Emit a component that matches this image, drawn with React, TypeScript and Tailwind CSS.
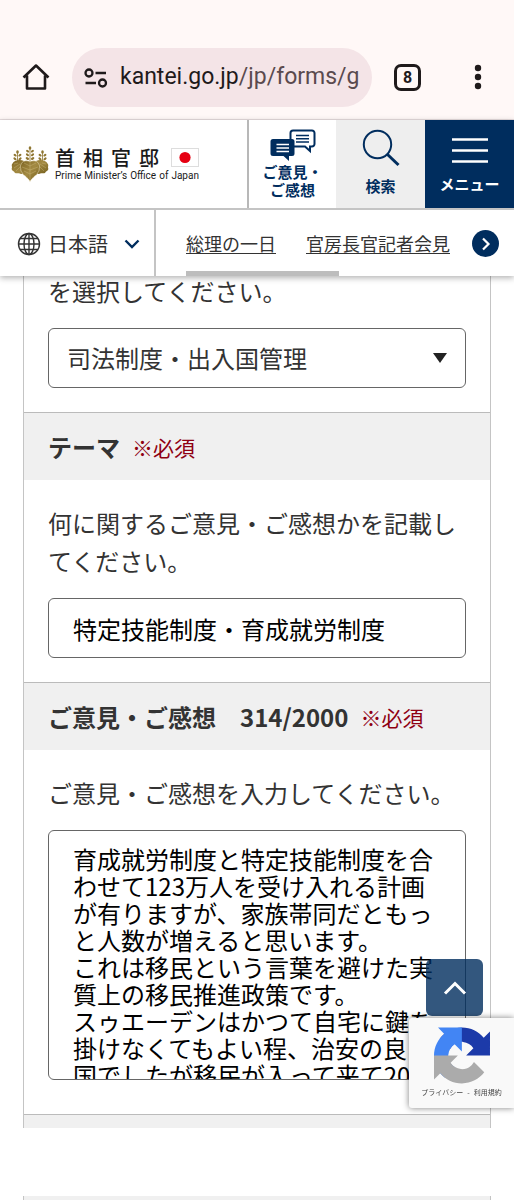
import React, { useState } from 'react';

const newsLinks = [
  { href: '#day', label: '総理の一日' },
  { href: '#press', label: '官房長官記者会見' },
];

const categories = ['司法制度・出入国管理', '経済・財政', '外交・安全保障'];

const initialOpinion = `育成就労制度と特定技能制度を合わせて123万人を受け入れる計画が有りますが、家族帯同だともっと人数が増えると思います。
これは移民という言葉を避けた実質上の移民推進政策です。
スゥエーデンはかつて自宅に鍵を掛けなくてもよい程、治安の良い国でしたが移民が入って来て2000年`;

const BrowserBar: React.FC = () => (
  <div className="flex h-[120px] items-end border-b border-[#e6dcdd] bg-[#fff8f7] pb-3 pl-[22px] pr-[22px] text-[#1f1a1b]">
    <button aria-label="Home" className="mb-4 shrink-0">
      <svg width="28" height="28" viewBox="0 0 28 28" fill="none" stroke="currentColor" strokeWidth="2.6" strokeLinejoin="round">
        <path d="M1.5 14.5 14 2.5l12.500 12M5 12.500v13h18v-13" />
      </svg>
    </button>
    <button className="ml-[22px] flex h-[59px] min-w-0 flex-1 items-center overflow-hidden rounded-full bg-[#f4e4e7] pl-3">
      <svg className="shrink-0" width="24" height="20" viewBox="0 0 24 20" fill="none" stroke="currentColor" strokeWidth="2.300">
        <circle cx="5" cy="5" r="3.500" />
        <path d="M11.500 5H22M1.500 15H12" />
        <circle cx="18.500" cy="15" r="3.500" />
      </svg>
      <span className="ml-3 whitespace-nowrap font-[Roboto,sans-serif] text-[23px]">
        kantei.go.jp<span className="text-[#5a4a4e]">/jp/forms/g</span>
      </span>
    </button>
    <button
      aria-label="Tabs"
      className="mb-4 ml-[22px] flex h-[27px] w-[27px] shrink-0 items-center justify-center rounded-[7px] border-[3px] border-[#1f1a1b] font-[Roboto,sans-serif] text-base font-bold"
    >
      8
    </button>
    <button aria-label="More" className="mb-4 ml-[43px] shrink-0">
      <svg width="28" height="28" viewBox="0 0 28 28" fill="currentColor">
        <circle cx="14" cy="5" r="3.200" />
        <circle cx="14" cy="14" r="3.200" />
        <circle cx="14" cy="23" r="3.200" />
      </svg>
    </button>
  </div>
);

const Sprig: React.FC<{ x: number; y: number; tall?: boolean }> = ({ x, y, tall }) => (
  <g transform={`translate(${x} ${y})`} fill="#8f7631">
    <path d="M-.4 -1h.8v14h-.8z" />
    <ellipse cx="0" cy="-1" rx="1.300" ry="1.800" />
    <ellipse cx="-2.400" cy="2.200" rx="1.700" ry="1.100" transform="rotate(35 -2.400 2.200)" />
    <ellipse cx="2.400" cy="2.200" rx="1.700" ry="1.100" transform="rotate(-35 2.400 2.200)" />
    <ellipse cx="-2.500" cy="5.800" rx="1.800" ry="1.100" transform="rotate(35 -2.500 5.800)" />
    <ellipse cx="2.500" cy="5.800" rx="1.800" ry="1.100" transform="rotate(-35 2.500 5.800)" />
    {tall && (
      <>
        <ellipse cx="-2.600" cy="9.500" rx="1.900" ry="1.200" transform="rotate(35 -2.600 9.500)" />
        <ellipse cx="2.600" cy="9.500" rx="1.900" ry="1.200" transform="rotate(-35 2.600 9.500)" />
      </>
    )}
  </g>
);

const PaulowniaCrest: React.FC = () => (
  <svg className="shrink-0" width="38" height="36" viewBox="0 0 38 36">
    <defs>
      <linearGradient id="gold" x1="0" x2="1" y1="0" y2="1">
        <stop offset="0" stopColor="#7d6422" />
        <stop offset=".5" stopColor="#a38a42" />
        <stop offset="1" stopColor="#75601f" />
      </linearGradient>
    </defs>
    <Sprig x={19} y={3} tall />
    <Sprig x={6.5} y={7} />
    <Sprig x={31.5} y={7} />
    <path
      fill="url(#gold)"
      d="M13 15C9 13 3 14 1.500 17.500c-1.800 2 .3 3-.9 5.500.4 2 2.500 2 3.400 4 2 1 4-.5 6 1 2-.2 4-1 5-1.500zM25 15c4-2 10-1 11.500 2.500 1.800 2-.3 3 .9 5.500-.4 2-2.500 2-3.400 4-2 1-4-.5-6 1-2-.2-4-1-5-1.500z"
    />
    <path
      fill="url(#gold)"
      stroke="#efe6c8"
      strokeWidth=".5"
      d="M19 15.500c-4-1.500-8-.5-9 3-1.500 2 .2 3.500-.2 5.500.2 2 2 2.500 2.200 4.500 1.500 1.500 2.500 1 3.500 3 1 .5 2.500 2 3.500 4 1-2 2.500-3.500 3.500-4 1-2 2-1.500 3.500-3 .2-2 2-2.500 2.200-4.500-.4-2 1.300-3.500-.2-5.500-1-3.500-5-4.500-9-3z"
    />
    <path
      fill="none"
      stroke="#d8c88f"
      strokeWidth=".35"
      d="M19 16v17M19 20l-6-3M19 20l6-3M19 24l-8-3M19 24l8-3M19 28l-6-3M19 28l6-3M9 18l-6 4M9 21l-4 4M7 17l-4 1M29 18l6 4M29 21l4 4M31 17l4 1"
    />
  </svg>
);

const SiteHeader: React.FC = () => (
  <header className="relative z-10 bg-white shadow-[0_2px_6px_rgba(0,0,0,0.3)]">
    <div className="flex h-[90px] border-b-2 border-[#c4c4c4]">
      <a href="#top" className="flex min-w-0 flex-1 items-center pl-[11px]">
        <PaulowniaCrest />
        <span className="ml-[6px] flex w-[144px] shrink-0 flex-col">
          <span className="flex items-center justify-between">
            <span className="flex gap-2 text-xl leading-5 font-medium text-[#1a1a1a]">
              <span>首</span>
              <span>相</span>
              <span>官</span>
              <span>邸</span>
            </span>
            <svg width="28" height="19" viewBox="0 0 28 19">
              <rect x=".5" y=".5" width="27" height="18" fill="#fff" stroke="#ddd" />
              <circle cx="14" cy="9.500" r="5.600" fill="#e60012" />
            </svg>
          </span>
          <span className="mt-[2px] flex justify-between font-[Roboto,sans-serif] text-[10px] leading-[11px] text-[#1a1a1a]">
            <span>Prime</span>
            <span>Minister’s</span>
            <span>Office</span>
            <span>of</span>
            <span>Japan</span>
          </span>
        </span>
      </a>
      <a href="#opinion" className="flex w-[89px] flex-col items-center border-l-2 border-[#b8b8b8] pt-[9px] text-center text-[15px] leading-[18px] font-bold text-[#002d5e]">
        <svg width="46" height="34" viewBox="0 0 46 34">
          <path d="M23 1.500h19a2.500 2.500 0 0 1 2.500 2.500v11a2.500 2.500 0 0 1-2.500 2.500h-2v4.500l-5-4.500H23a2.500 2.500 0 0 1-2.500-2.500V4A2.500 2.500 0 0 1 23 1.500z" fill="#fff" stroke="#002d5e" strokeWidth="2" />
          <path d="M26 6.500h13M26 9.800h13M26 13h13" stroke="#002d5e" strokeWidth="1.500" />
          <path d="M3 10h19a2.500 2.500 0 0 1 2.500 2.500v12A2.500 2.500 0 0 1 22 27h-3v5l-5.500-5H3A2.500 2.500 0 0 1 .5 24.500v-12A2.500 2.500 0 0 1 3 10z" fill="#002d5e" />
          <path d="M6.500 15.500H19M6.500 19H19M6.500 22.500H19" stroke="#fff" strokeWidth="1.500" />
        </svg>
        <span>
          ご意見・
          <br />
          ご感想
        </span>
      </a>
      <button className="flex w-[89px] flex-col items-center bg-[#eee] pt-[9px] text-[15px] leading-[18px] font-bold text-[#002d5e]">
        <svg width="38" height="38" viewBox="0 0 38 38" fill="none" stroke="currentColor">
          <circle cx="15.500" cy="15.500" r="13.700" strokeWidth="2" />
          <path d="m25 25 11.500 11" strokeWidth="3" />
        </svg>
        <span className="mt-[10px]">検索</span>
      </button>
      <button className="flex w-[89px] flex-col items-center bg-[#002d5e] pt-[17px] text-[15px] leading-[18px] font-bold text-white">
        <svg width="36" height="28" viewBox="0 0 36 28" stroke="currentColor" strokeWidth="2.500">
          <path d="M0 2.500h36M0 13.500h36M0 24.500h36" />
        </svg>
        <span className="mt-[10px]">メニュー</span>
      </button>
    </div>

    <div className="flex h-[66px]">
      <button className="flex w-[156px] shrink-0 items-center border-r-2 border-[#c4c4c4] pt-[2px] pl-[17px] text-xl text-[#333]">
        <svg width="24" height="24" viewBox="0 0 24 24" fill="none" stroke="currentColor" strokeWidth="1.400">
          <circle cx="12" cy="12" r="10.500" />
          <ellipse cx="12" cy="12" rx="5" ry="10.500" />
          <path d="M12 1.500v21M1.500 12h21M3 6.500h18M3 17.500h18" />
        </svg>
        <span className="ml-[7px]">日本語</span>
        <svg className="ml-4" width="16" height="10" viewBox="0 0 16 10" fill="none" stroke="#002d5e" strokeWidth="2.400">
          <path d="m1.500 1.500 6.500 6.500 6.500-6.500" />
        </svg>
      </button>
      <nav className="flex min-w-0 flex-1 flex-col justify-between pl-[30px]">
        <div className="flex h-[60px] items-end">
          <ul className="flex flex-1 gap-[30px] pb-[13px] text-lg leading-7 whitespace-nowrap text-[#333]">
            {newsLinks.map((link) => (
              <li key={link.href}>
                <a href={link.href} className="underline decoration-1 underline-offset-2">{link.label}</a>
              </li>
            ))}
          </ul>
          <button aria-label="次へ" className="mr-[15px] mb-[13px] flex h-[27px] w-[27px] shrink-0 items-center justify-center rounded-full bg-[#002d5e]">
            <svg width="10" height="14" viewBox="0 0 10 14" fill="none" stroke="#fff" strokeWidth="2.200">
              <path d="m2 1.500 5.500 5.500L2 12.500" />
            </svg>
          </button>
        </div>
        <div className="h-[5px] w-[153px] bg-[#bdbdbd]" />
      </nav>
    </div>
  </header>
);

const FieldHeading: React.FC<{ htmlFor: string; title: string }> = ({ htmlFor, title }) => (
  <div className="flex h-[68px] items-center border-t border-[#bbb] bg-[#f0f0f0] px-6">
    <label htmlFor={htmlFor} className="text-2xl font-bold whitespace-pre">{title}</label>
    <span className="ml-3 text-[21px] text-[#8f0012]">※必須</span>
  </div>
);

const RecaptchaBadge: React.FC = () => (
  <div className="fixed right-0 bottom-[92px] z-20 flex h-[90px] w-[105px] flex-col items-center rounded-l-[3px] bg-[#f9f9f9] pt-[9px] shadow-[0_0_6px_rgba(0,0,0,0.5)]">
    <svg width="56" height="57" viewBox="0 0 64 64">
      <path fill="#1c3aa9" d="M64 31.955l-.033-1.370V4.687l-7.160 7.160C50.948 4.674 42.033.093 32.050.093c-10.400 0-19.622 4.960-25.458 12.640l11.736 11.860a15.550 15.550 0 0 1 4.754-5.334c2.050-1.600 4.952-2.906 8.968-2.906.485 0 .860.057 1.135.163 4.976.393 9.288 3.140 11.828 7.124l-8.307 8.307L64 31.953" />
      <path fill="#4285f4" d="M31.862.094l-1.370.033H4.594l7.160 7.160C4.580 13.147 0 22.060 0 32.046c0 10.400 4.960 19.622 12.640 25.458L24.500 45.768a15.550 15.550 0 0 1-5.334-4.754c-1.600-2.050-2.906-4.952-2.906-8.968 0-.485.057-.860.163-1.135.393-4.976 3.140-9.288 7.124-11.828l8.307 8.307L31.860.095" />
      <path fill="#ababab" d="M.001 32.045l.033 1.370v25.898l7.160-7.160c5.860 7.173 14.774 11.754 24.760 11.754 10.400 0 19.622-4.960 25.458-12.640l-11.736-11.860a15.550 15.550 0 0 1-4.754 5.334c-2.050 1.600-4.952 2.906-8.968 2.906-.485 0-.860-.057-1.135-.163-4.976-.393-9.288-3.140-11.828-7.124l8.307-8.307L0 32.047" />
    </svg>
    <p className="mt-[2px] flex gap-1 text-[7px] leading-3 whitespace-nowrap text-[#444]">
      <a href="#privacy">プライバシー</a>
      <span>-</span>
      <a href="#terms">利用規約</a>
    </p>
  </div>
);

const App: React.FC = () => {
  const [category, setCategory] = useState(categories[0]);
  const [theme, setTheme] = useState('特定技能制度・育成就労制度');
  const [opinion, setOpinion] = useState(initialOpinion);

  return (
    <div className="bg-white font-['Noto_Sans_CJK_JP',sans-serif] text-[#333]">
      <BrowserBar />
      <SiteHeader />

      <main className="px-[23px]">
        <form className="-mt-1 border-x border-[#c4c4c4] text-2xl leading-[38px]">
          <section className="px-6 pb-6">
            <label htmlFor="category" className="block">を選択してください。</label>
            <div className="relative mt-[18px]">
              <select
                id="category"
                value={category}
                onChange={(e) => setCategory(e.target.value)}
                className="block h-[60px] w-full appearance-none rounded-md border border-[#666] bg-white px-[18px] text-2xl"
              >
                {categories.map((name) => (
                  <option key={name}>{name}</option>
                ))}
              </select>
              <svg className="pointer-events-none absolute top-6 right-[18px]" width="16" height="12" viewBox="0 0 16 12" fill="#222">
                <path d="M1 1h14L8 11z" />
              </svg>
            </div>
          </section>

          <section>
            <FieldHeading htmlFor="theme" title="テーマ" />
            <div className="p-6">
              <p>何に関するご意見・ご感想かを記載してください。</p>
              <input
                id="theme"
                type="text"
                value={theme}
                onChange={(e) => setTheme(e.target.value)}
                className="mt-[18px] block h-[60px] w-full rounded-md border border-[#666] px-6 text-2xl text-black"
              />
            </div>
          </section>

          <section>
            <FieldHeading htmlFor="opinion" title="ご意見・ご感想　314/2000" />
            <div className="px-6 pt-6 pb-[34px]">
              <p>ご意見・ご感想を入力してください。</p>
              <textarea
                id="opinion"
                value={opinion}
                onChange={(e) => setOpinion(e.target.value)}
                className="mt-[18px] block h-[250px] w-full resize-none overflow-hidden rounded-md border border-[#666] px-6 pt-[14px] text-2xl leading-[27px] text-black"
              />
            </div>
          </section>

          <div className="h-[14px] border-t border-[#bbb] bg-[#f0f0f0]" />
        </form>
        <div className="mt-[68px] h-1 border-x border-[#c4c4c4] bg-[#f0f0f0]" />
      </main>

      <button
        aria-label="ページの先頭へ"
        className="fixed right-[31px] bottom-[184px] z-20 flex h-[57px] w-[57px] items-center justify-center rounded-md bg-[#002d5e]/80"
      >
        <svg width="24" height="14" viewBox="0 0 24 14" fill="none" stroke="#fff" strokeWidth="3">
          <path d="M2 12.500 12 2.500l10 10" />
        </svg>
      </button>
      <RecaptchaBadge />
    </div>
  );
};

export default App;
